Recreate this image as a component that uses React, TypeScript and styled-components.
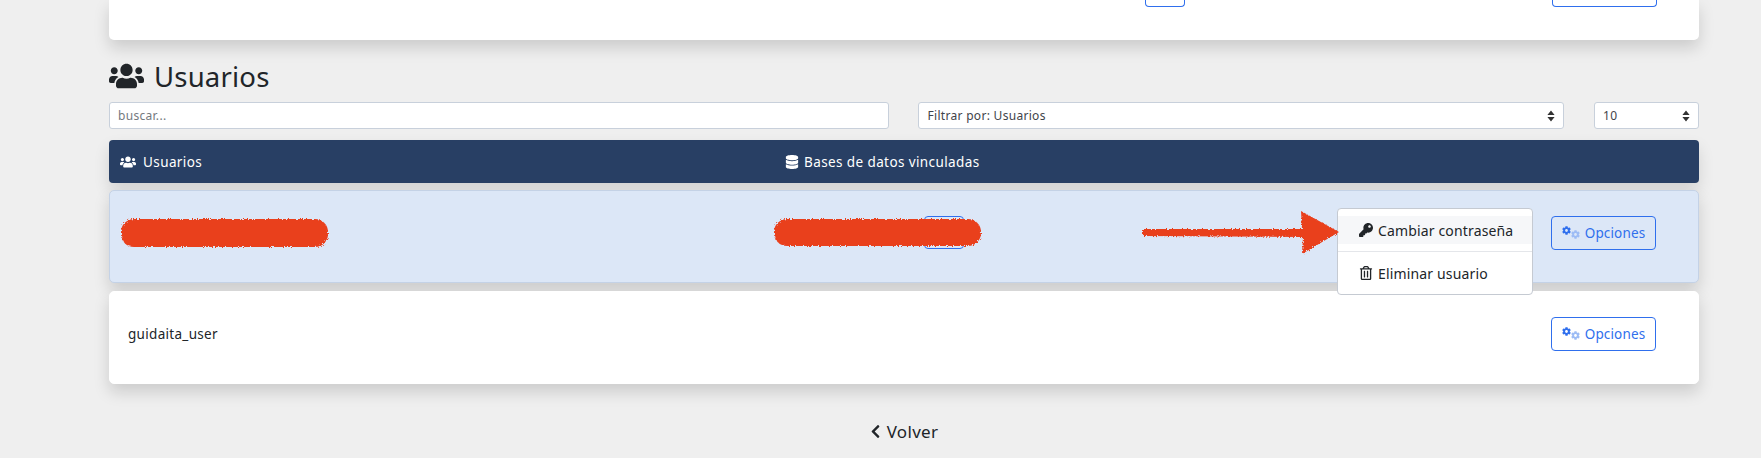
import React from "react";
import styled, { createGlobalStyle } from "styled-components";
import { FaUsers, FaDatabase, FaKey, FaRegTrashAlt, FaCog, FaChevronLeft } from "react-icons/fa";

const chevrons =
  "data:image/svg+xml,%3Csvg xmlns='http://www.w3.org/2000/svg' viewBox='0 0 10 14'%3E%3Cpath fill='%23333' d='M5 0l4.5 5.6h-9zM5 14L.5 8.4h9z'/%3E%3C/svg%3E";

const App = () => (
  <Page>
    <GlobalStyle />
    <TopCard>
      <SmallButton />
      <WideButton />
    </TopCard>
    <Title>
      <FaUsers />
      <span>Usuarios</span>
    </Title>
    <Filters>
      <Search placeholder="buscar..." />
      <FilterSelect defaultValue="Usuarios">
        <option value="Usuarios">Filtrar por: Usuarios</option>
      </FilterSelect>
      <PageSelect defaultValue="10">
        <option value="10">10</option>
      </PageSelect>
    </Filters>
    <HeaderBar>
      <NameCol>
        <FaUsers />
        <span>Usuarios</span>
      </NameCol>
      <DbCol>
        <FaDatabase />
        <span>Bases de datos vinculadas</span>
      </DbCol>
    </HeaderBar>
    <Row $active>
      <NameCol />
      <DbCol>
        <LinkedButton />
      </DbCol>
      <OptionsButton>
        <CogIcon />
        <CogIcon $light />
        Opciones
      </OptionsButton>
      <Scribble $left={8} width={214} height={36} viewBox="0 0 214 36">
        <rect x="3" y="4" width="207" height="28" rx="13" />
      </Scribble>
      <Scribble $left={661} width={214} height={36} viewBox="0 0 214 36">
        <rect x="3" y="4" width="207" height="27" rx="13" />
      </Scribble>
      <Arrow width={212} height={50} viewBox="0 0 212 50">
        <path d="M3 21L163 21L162 3L200 24L163 46L164 29L3 28Z" />
      </Arrow>
      <Menu>
        <MenuItem $active>
          <FaKey />
          Cambiar contraseña
        </MenuItem>
        <MenuDivider />
        <MenuItem>
          <FaRegTrashAlt />
          Eliminar usuario
        </MenuItem>
      </Menu>
    </Row>
    <Row>
      <NameCol>guidaita_user</NameCol>
      <DbCol />
      <OptionsButton>
        <CogIcon />
        <CogIcon $light />
        Opciones
      </OptionsButton>
    </Row>
    <Back>
      <FaChevronLeft />
      Volver
    </Back>
    <svg width="0" height="0">
      <filter id="rough" x="-5%" y="-20%" width="110%" height="140%">
        <feTurbulence type="fractalNoise" baseFrequency="0.7" numOctaves="2" seed="4" />
        <feDisplacementMap in="SourceGraphic" scale="4" />
      </filter>
    </svg>
  </Page>
);

const GlobalStyle = createGlobalStyle`
  html, body {
    margin: 0;
    height: 458px;
    overflow: hidden;
    background: #efefef;
  }
  body {
    font-family: "Noto Sans", Lato, sans-serif;
    color: #212529;
  }
`;

const Page = styled.div`
  display: flex;
  flex-direction: column;
  width: 1590px;
  margin-left: 109px;
`;

const TopCard = styled.div`
  display: flex;
  justify-content: flex-end;
  height: 40px;
  padding-right: 42px;
  box-sizing: border-box;
  background: #fff;
  border-radius: 0 0 5px 5px;
  box-shadow: 0 8px 16px rgba(0, 0, 0, 0.15);
`;

const SmallButton = styled.div`
  width: 40px;
  height: 7px;
  margin-right: 367px;
  box-sizing: border-box;
  border: 1px solid #2f6fed;
  border-top: 0;
  border-radius: 0 0 4px 4px;
`;

const WideButton = styled(SmallButton)`
  width: 105px;
  margin-right: 0;
`;

const Title = styled.h2`
  display: flex;
  align-items: center;
  gap: 10px;
  height: 34px;
  margin: 19px 0 9px;
  font-size: 27.5px;
  font-weight: 400;
  letter-spacing: 0.2px;
  svg {
    width: 35px;
    height: 28px;
  }
`;

const Filters = styled.div`
  display: flex;
  margin-bottom: 11px;
`;

const Search = styled.input`
  width: 781px;
  height: 27px;
  box-sizing: border-box;
  padding: 0 8px;
  margin-right: 29px;
  background: #fff;
  border: 1px solid #c8d0db;
  border-radius: 3px;
  font: 12px "Noto Sans", sans-serif;
  letter-spacing: 0.3px;
  &::placeholder {
    color: #74797e;
  }
`;

const FilterSelect = styled.select`
  width: 646px;
  height: 27px;
  box-sizing: border-box;
  padding: 0 8px;
  margin-right: 30px;
  appearance: none;
  background: #fff url("${chevrons}") no-repeat right 8px center / 8px 12px;
  border: 1px solid #c8d0db;
  border-radius: 3px;
  color: #3f444a;
  font: 12px "Noto Sans", sans-serif;
  letter-spacing: 0.3px;
`;

const PageSelect = styled(FilterSelect)`
  width: 105px;
  margin-right: 0;
`;

const HeaderBar = styled.div`
  display: flex;
  align-items: center;
  height: 43px;
  margin-bottom: 7px;
  padding-left: 11px;
  background: #283f64;
  border-radius: 4px;
  color: #fff;
  font-size: 13.5px;
  letter-spacing: 0.4px;
  box-shadow: 0 8px 16px rgba(0, 0, 0, 0.12);
  svg {
    width: 16px;
    height: 14px;
    margin-right: 5px;
  }
  & > div:first-child {
    width: 664px;
  }
  & > div:first-child svg {
    margin-right: 7px;
  }
  & > div:last-child svg {
    margin-right: 4px;
  }
`;

const NameCol = styled.div`
  display: flex;
  align-items: center;
  width: 657px;
`;

const DbCol = styled.div`
  display: flex;
  align-items: center;
  flex: 0 0 auto;
`;

const Row = styled.div<{ $active?: boolean }>`
  position: relative;
  display: flex;
  align-items: center;
  height: 93px;
  box-sizing: border-box;
  margin-bottom: 8px;
  padding: 0 42px 8px 18px;
  background: ${(p) => (p.$active ? "#dce7f7" : "#fff")};
  border: 1px solid ${(p) => (p.$active ? "#c4d2e6" : "#fff")};
  border-radius: 5px;
  font-size: 13.5px;
  letter-spacing: 0.3px;
  box-shadow: 0 8px 16px rgba(0, 0, 0, 0.15);
`;

const LinkedButton = styled.div`
  width: 40px;
  height: 33px;
  margin-left: 139px;
  box-sizing: border-box;
  border: 1px solid #2f6fed;
  border-radius: 4px;
`;

const OptionsButton = styled.button`
  display: flex;
  align-items: center;
  justify-content: center;
  width: 105px;
  height: 34px;
  margin-left: auto;
  padding: 0;
  background: transparent;
  border: 1px solid #2f6fed;
  border-radius: 4px;
  color: #2f6fed;
  font: 13.5px "Noto Sans", sans-serif;
  letter-spacing: 0.15px;
`;

const CogIcon = styled(FaCog)<{ $light?: boolean }>`
  width: 9px;
  height: 9px;
  margin: ${(p) => (p.$light ? "4px 5px 0 0" : "-5px 0 0 0")};
  color: ${(p) => (p.$light ? "#9dbcf5" : "#2f6fed")};
`;

const Scribble = styled.svg<{ $left: number }>`
  position: absolute;
  top: 24px;
  left: ${(p) => p.$left}px;
  fill: #e93f1e;
  filter: url(#rough);
  z-index: 3;
`;

const Arrow = styled.svg`
  position: absolute;
  top: 17px;
  left: 1029px;
  fill: #e93f1e;
  filter: url(#rough);
  z-index: 3;
`;

const Menu = styled.div`
  position: absolute;
  top: 17px;
  left: 1227px;
  width: 196px;
  height: 87px;
  box-sizing: border-box;
  padding: 7px 0;
  background: #fff;
  border: 1px solid #c5cad2;
  border-radius: 4px;
  z-index: 2;
  font-size: 14px;
  letter-spacing: 0.15px;
`;

const MenuItem = styled.div<{ $active?: boolean }>`
  display: flex;
  align-items: center;
  gap: 5px;
  height: 28px;
  padding-left: 21px;
  background: ${(p) => (p.$active ? "#f6f7f9" : "transparent")};
  svg {
    width: 14px;
    height: 14px;
  }
`;

const MenuDivider = styled.div`
  height: 1px;
  margin: 7px 0;
  background: #e4e6ea;
`;

const Back = styled.div`
  display: flex;
  align-items: center;
  justify-content: center;
  gap: 6px;
  margin-top: 28px;
  font-size: 17px;
  letter-spacing: 0.3px;
  svg {
    width: 11px;
    height: 15px;
  }
`;

export default App;
